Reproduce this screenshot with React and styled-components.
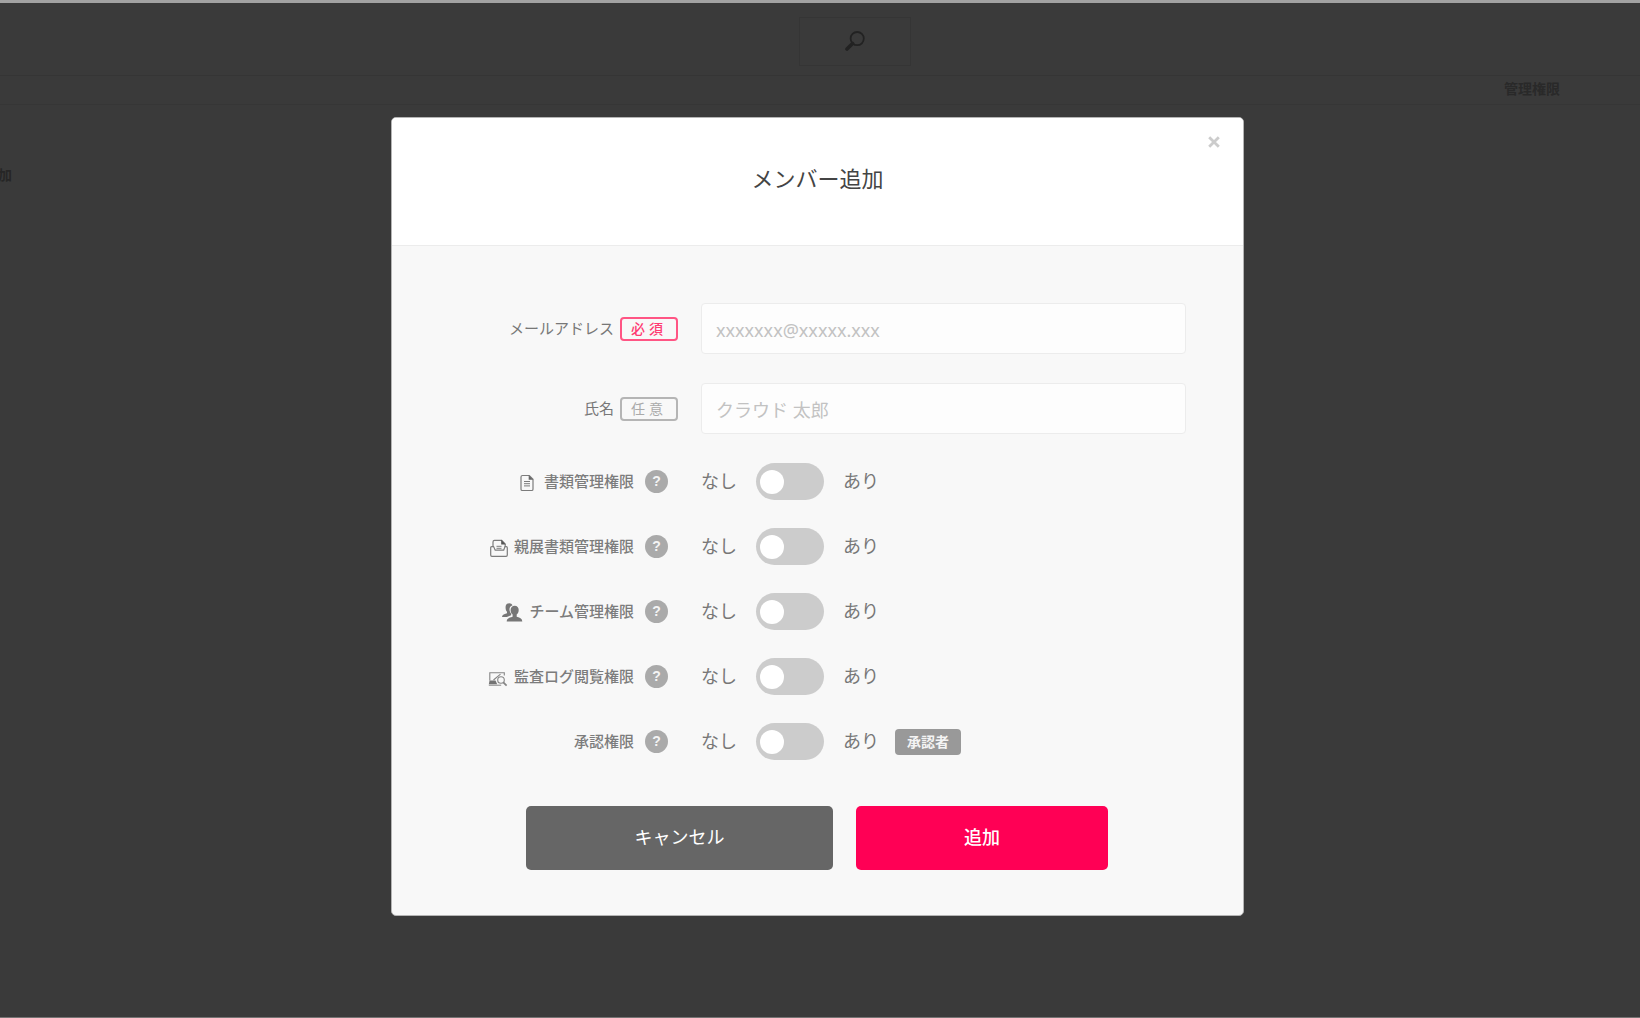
import React from "react";
import styled, { createGlobalStyle } from "styled-components";

const GlobalStyle = createGlobalStyle`
  * { box-sizing: border-box; }
  body {
    margin: 0;
    background: #3a3a3a;
    color: #666;
    font-family: "Liberation Sans", "Noto Sans CJK JP", sans-serif;
    overflow-x: hidden;
  }
  button, input { font-family: inherit; margin: 0; }
`;

const Page = styled.div`
  min-height: 100vh;
  display: flex;
  flex-direction: column;
  border-top: 3px solid #a2a2a2;
  border-bottom: 1px solid #757373;
  color: #262626;
`;

const TopBar = styled.header`
  display: flex;
  justify-content: center;
  padding: 14px 0 9px 70px;
  border-bottom: 1px solid #353535;
`;

const SearchButton = styled.button`
  width: 112px;
  height: 49px;
  padding: 0 0 1px;
  display: flex;
  align-items: center;
  justify-content: center;
  background: none;
  border: 1px solid #353535;
  color: #222;
`;

const ColumnBar = styled.div`
  display: flex;
  justify-content: flex-end;
  align-items: center;
  height: 29px;
  padding: 0 80px 3px 0;
  border-bottom: 1px solid #363636;
  color: #292929;
  font-size: 14px;
  line-height: 20px;
  font-weight: 700;
`;

const PageAction = styled.div`
  display: flex;
  justify-content: flex-end;
  width: 12px;
  margin-top: 60px;
  overflow: hidden;
  font-size: 14px;
  line-height: 20px;
  font-weight: 700;
  white-space: nowrap;
`;

const Overlay = styled.div`
  position: absolute;
  inset: 0;
  display: flex;
  justify-content: center;
  align-items: flex-start;
  padding: 117px 5px 40px 0;
`;

const Dialog = styled.section`
  position: relative;
  width: 100%;
  max-width: 853px;
  border: 1px solid #b4b4b4;
  border-radius: 5px;
  background: #f8f8f8;
  overflow: hidden;
`;

const DialogHeader = styled.header`
  display: flex;
  justify-content: center;
  padding: 45px 0 48px;
  background: #fff;
  border-bottom: 1px solid #ececec;
`;

const Title = styled.h1`
  margin: 0;
  color: #444;
  font-size: 22px;
  line-height: 34px;
  font-weight: 400;
`;

const CloseButton = styled.button`
  position: absolute;
  top: 12px;
  right: 17px;
  width: 24px;
  height: 24px;
  padding: 0;
  display: flex;
  align-items: center;
  justify-content: center;
  border: 0;
  background: none;
  color: #ccc;
`;

const Form = styled.form`
  padding: 57px 57px 45px 0;
`;

const Rows = styled.div`
  display: flex;
  flex-direction: column;
  gap: ${(p) => p.$gap}px;
  margin-bottom: ${(p) => p.$after}px;
`;

const Row = styled.div`
  display: grid;
  grid-template-columns: 286px 1fr;
  column-gap: 23px;
  align-items: center;
`;

const LabelCell = styled.div`
  display: flex;
  justify-content: flex-end;
  align-items: center;
  gap: ${(p) => p.$gap}px;
  padding-right: ${(p) => p.$inset || 0}px;
`;

const FieldLabel = styled.label`
  font-size: 15px;
  line-height: 24px;
  color: #777;
`;

const Tag = styled.span`
  width: 58px;
  height: 24px;
  padding-right: 4px;
  border: 2px solid ${(p) => (p.$required ? "#ff5584" : "#b5b5b5")};
  border-radius: 4px;
  color: ${(p) => (p.$required ? "#ff3b72" : "#aaa")};
  font-size: 14px;
  line-height: 20px;
  font-weight: ${(p) => (p.$required ? 500 : 400)};
  text-align: center;
  white-space: pre;
`;

const TextInput = styled.input`
  width: 100%;
  height: 51px;
  padding: 2px 14px 0;
  border: 1px solid #ececec;
  border-radius: 4px;
  background: #fdfdfd;
  color: #666;
  font-family: "Noto Sans", "Noto Sans CJK JP", sans-serif;
  font-size: 18px;
  outline: none;
  &::placeholder { color: #c2c2c2; opacity: 1; }
`;

const SwitchLabel = styled.label`
  display: flex;
  align-items: center;
  gap: 6px;
  color: #7c7c7c;
  font-size: 15px;
  line-height: 24px;
  font-weight: 500;
`;

const HelpButton = styled.button`
  width: 23px;
  height: 23px;
  padding: 0;
  border: 0;
  border-radius: 50%;
  background: #aaa;
  color: #f4f4f4;
  font-size: 14px;
  line-height: 23px;
  font-weight: 700;
  text-align: center;
`;

const Choice = styled.div`
  display: flex;
  align-items: center;
  gap: 19px;
  height: 37px;
  color: #777;
  font-size: 18px;
  line-height: 26px;
`;

const Switch = styled.input`
  appearance: none;
  display: flex;
  align-items: center;
  width: 68px;
  height: 37px;
  padding: 0 4px;
  border-radius: 19px;
  background: #ccc;
  cursor: pointer;
  &::before {
    content: "";
    width: 24px;
    height: 24px;
    border-radius: 50%;
    background: #fff;
  }
  &:checked {
    justify-content: flex-end;
    background: #ff0055;
  }
`;

const RoleBadge = styled.span`
  height: 26px;
  padding: 0 12px;
  margin-left: -3px;
  border-radius: 4px;
  background: #999;
  color: #f4f4f4;
  font-size: 14px;
  line-height: 26px;
  font-weight: 700;
`;

const Actions = styled.div`
  display: flex;
  gap: 23px;
  padding-left: 134px;
`;

const ActionButton = styled.button`
  width: ${(p) => (p.$primary ? 252 : 307)}px;
  height: 64px;
  padding: 0 0 4px;
  border: 0;
  border-radius: 5px;
  background: ${(p) => (p.$primary ? "#ff0055" : "#666")};
  color: #fff;
  font-size: 18px;
  font-weight: ${(p) => (p.$primary ? 500 : 400)};
`;

const SearchIcon = () => (
  <svg width="20" height="20" viewBox="0 0 20 20" fill="none" stroke="currentColor" aria-hidden="true">
    <circle cx="12.2" cy="7.6" r="6.6" strokeWidth="1.8" />
    <path d="M7.6 12.4 2 18" strokeWidth="3.6" strokeLinecap="round" />
  </svg>
);

const CloseIcon = () => (
  <svg width="12" height="12" viewBox="0 0 12 12" fill="none" stroke="currentColor" strokeWidth="2.8" aria-hidden="true">
    <path d="M1.2 1.2 10.8 10.8M10.8 1.2 1.2 10.8" />
  </svg>
);

const DocumentIcon = () => (
  <svg width="20" height="20" viewBox="0 0 20 20" fill="none" stroke="#7c7c7c" aria-hidden="true">
    <path d="M4.500 3.500h6.800l3.700 3.800v9.900q0 1.300-1.300 1.300H4.300Q3 18.500 3 17.200V5q0-1.500 1.500-1.500z" strokeWidth="1.200" />
    <path d="M10.700 3.200v4.600h4.500z" fill="#666" stroke="none" />
    <path d="M6 9.500h6M6 11.700h6M6 13.900h6" strokeWidth="1" />
  </svg>
);

const TrayIcon = () => (
  <svg width="18" height="20" viewBox="0 0 18 20" fill="none" stroke="#7c7c7c" aria-hidden="true">
    <path d="M3 9.800V5Q3 3.300 4.500 3.300h7.200L15.200 7v2.800" strokeWidth="1.200" />
    <path d="M11.200 2.800v4.800h4.500z" fill="#555" stroke="none" />
    <path d="M6.500 9.300h5M6.500 11.300h5" strokeWidth="1" />
    <path d="M3 9.600H1.700Q.7 9.600.7 10.800V18q0 1.300 1.200 1.300h14.200q1.200 0 1.200-1.300v-7.200q0-1.200-1-1.200H15l-1.300 3.600H5.200L3.600 9.600z" strokeWidth="1.200" />
  </svg>
);

const TeamIcon = () => (
  <svg width="22" height="22" viewBox="0 0 22 22" fill="#777" aria-hidden="true">
    <path d="M6 2.700c2.300-1.200 4.800-.4 5.500 1.500-2.100.7-3.200 2.400-3 4.500.1 1.700.8 3.200 1.800 4.100l-.2 1.400-4.300 1.800H1c0-2 1.600-2.700 5-3.700v-1.600C4.200 8.800 4 4.100 6 2.700z" />
    <path d="M13.700 4.700c2.500 0 4 1.700 4 4.200 0 1.900-.8 3.600-2 4.600v2.200c3.700.9 5.600 1.900 5.600 4.800H5.700c0-2.900 2.200-3.900 5.900-4.800v-2.200c-1.200-1-2-2.700-2-4.600 0-2.500 1.600-4.200 4.100-4.200z" />
  </svg>
);

const AuditIcon = () => (
  <svg width="20" height="20" viewBox="0 0 20 20" fill="none" stroke="#858585" aria-hidden="true">
    <path d="M1.800 13.500V5.800h14.500v2.700M12.500 7.200 5.500 13" strokeWidth="1.100" />
    <path d="M1.500 13.500h6l1.700 3.800H.8z" fill="#747474" stroke="none" />
    <path d="M.8 18.200h12.400" strokeWidth="1" />
    <circle cx="13" cy="13" r="3.300" strokeWidth="1.100" />
    <path d="m15.300 15.300 3.300 3.400" strokeWidth="1.700" />
  </svg>
);

const FIELDS = [
  { id: "email", type: "email", label: "メールアドレス", tag: "必 須", required: true, placeholder: "xxxxxxx@xxxxx.xxx" },
  { id: "name", type: "text", label: "氏名", tag: "任 意", required: false, placeholder: "クラウド 太郎" },
];

const PERMISSIONS = [
  { id: "documents", label: "書類管理権限", Icon: DocumentIcon },
  { id: "confidential", label: "親展書類管理権限", Icon: TrayIcon },
  { id: "team", label: "チーム管理権限", Icon: TeamIcon },
  { id: "audit", label: "監査ログ閲覧権限", Icon: AuditIcon },
  { id: "approval", label: "承認権限", badge: "承認者" },
];

export default function App() {
  return (
    <>
      <GlobalStyle />
      <Page>
        <TopBar>
          <SearchButton type="button" aria-label="検索"><SearchIcon /></SearchButton>
        </TopBar>
        <ColumnBar>管理権限</ColumnBar>
        <PageAction>加</PageAction>
      </Page>
      <Overlay>
        <Dialog role="dialog" aria-modal="true" aria-labelledby="dialog-title">
          <DialogHeader>
            <Title id="dialog-title">メンバー追加</Title>
          </DialogHeader>
          <CloseButton type="button" aria-label="閉じる"><CloseIcon /></CloseButton>
          <Form onSubmit={(e) => e.preventDefault()}>
            <Rows $gap={29} $after={29}>
              {FIELDS.map((f) => (
                <Row key={f.id}>
                  <LabelCell $gap={6}>
                    <FieldLabel htmlFor={f.id}>{f.label}</FieldLabel>
                    <Tag $required={f.required}>{f.tag}</Tag>
                  </LabelCell>
                  <TextInput id={f.id} type={f.type} placeholder={f.placeholder} />
                </Row>
              ))}
            </Rows>
            <Rows $gap={28} $after={46}>
              {PERMISSIONS.map(({ id, label, Icon, badge }) => (
                <Row key={id}>
                  <LabelCell $gap={11} $inset={10}>
                    <SwitchLabel htmlFor={id}>
                      {Icon && <Icon />}
                      {label}
                    </SwitchLabel>
                    <HelpButton type="button" aria-label={`${label}のヘルプ`}>?</HelpButton>
                  </LabelCell>
                  <Choice>
                    <span>なし</span>
                    <Switch id={id} type="checkbox" />
                    <span>あり</span>
                    {badge && <RoleBadge>{badge}</RoleBadge>}
                  </Choice>
                </Row>
              ))}
            </Rows>
            <Actions>
              <ActionButton type="button">キャンセル</ActionButton>
              <ActionButton type="submit" $primary>追加</ActionButton>
            </Actions>
          </Form>
        </Dialog>
      </Overlay>
    </>
  );
}
